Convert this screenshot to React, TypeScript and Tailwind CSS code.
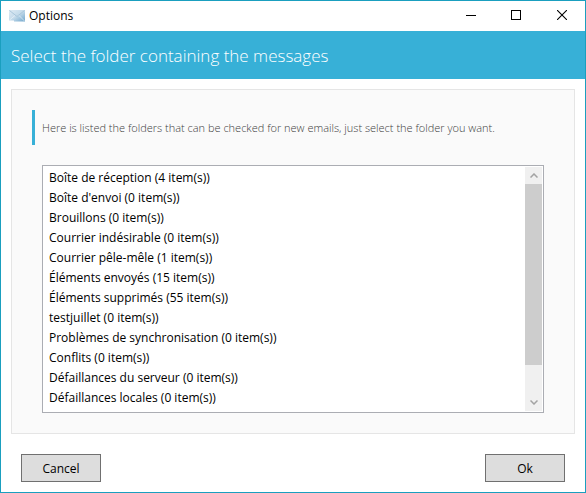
import React, { useRef, useState } from "react";

const folders = [
  { name: "Boîte de réception", count: 4 },
  { name: "Boîte d'envoi", count: 0 },
  { name: "Brouillons", count: 0 },
  { name: "Courrier indésirable", count: 0 },
  { name: "Courrier pêle-mêle", count: 1 },
  { name: "Éléments envoyés", count: 15 },
  { name: "Éléments supprimés", count: 55 },
  { name: "testjuillet", count: 0 },
  { name: "Problèmes de synchronisation", count: 0 },
  { name: "Conflits", count: 0 },
  { name: "Défaillances du serveur", count: 0 },
  { name: "Défaillances locales", count: 0 },
];

function MailIcon() {
  return (
    <svg className="w-4 h-3" viewBox="0 0 16 12" aria-hidden="true">
      <defs>
        <linearGradient id="mail" x1="0" y1="0" x2="1" y2="1">
          <stop offset="0" stopColor="#dfebf4" />
          <stop offset="0.5" stopColor="#c3daea" />
          <stop offset="1" stopColor="#6fa5cb" />
        </linearGradient>
      </defs>
      <path d="M0 0h16v11.5H5V10.5H0z" fill="url(#mail)" />
      <path d="M0.5 0.5L8 6.5L15.5 0.5" fill="none" stroke="#a5c3d8" strokeWidth="0.9" />
      <path d="M0.5 10L6 5.5M15.5 11L10 5.5" fill="none" stroke="#f3f9fc" strokeWidth="0.6" />
    </svg>
  );
}

function TitleBar() {
  return (
    <div className="flex h-[30px] items-center justify-between bg-white">
      <div className="flex items-center gap-1 pl-2">
        <MailIcon />
        <span className="text-xs">Options</span>
      </div>
      <div className="flex h-full pb-0.5">
        <button aria-label="Minimize" className="flex w-11 items-center justify-center">
          <svg className="size-[10px]" viewBox="0 0 10 10" shapeRendering="crispEdges">
            <path d="M0 5.5h10" stroke="#000" />
          </svg>
        </button>
        <button aria-label="Maximize" className="flex w-[46px] items-center justify-center">
          <svg className="size-[10px]" viewBox="0 0 10 10" shapeRendering="crispEdges">
            <path d="M0.5 0.5h9v9h-9z" fill="none" stroke="#000" />
          </svg>
        </button>
        <button aria-label="Close" className="flex w-[46px] items-center justify-center">
          <svg className="size-[10px]" viewBox="0 0 10 10">
            <path d="M0 0l10 10M10 0L0 10" stroke="#000" strokeWidth="1.1" />
          </svg>
        </button>
      </div>
    </div>
  );
}

export default function App() {
  const [selected, setSelected] = useState("");
  const listRef = useRef<HTMLSelectElement>(null);

  const scrollList = (delta: number) => {
    listRef.current?.scrollBy({ top: delta });
  };

  return (
    <div className="flex min-h-screen flex-col border border-[#1a9fbf] bg-white font-['Open_Sans','Noto_Sans',sans-serif] text-black">
      <TitleBar />

      <header className="flex h-12 items-center bg-[#37b0d7] px-[10px] pt-0.5">
        <h1 className="text-[17px] font-light text-white">Select the folder containing the messages</h1>
      </header>

      <main className="mx-[10px] mt-[10px] flex flex-1 flex-col border border-[#e5e5e5] bg-[#fafafa] px-5 py-5">
        <label
          htmlFor="folders"
          className="flex h-[35px] items-center border-l-3 border-[#37b0d7] pt-0.5 pl-[7px] text-[11px] font-light text-[#404040]"
        >
          Here is listed the folders that can be checked for new emails, just select the folder you want.
        </label>

        {/* Folder list */}
        <div className="mt-5 mr-[10px] ml-[10px] flex h-[248px] border border-[#abadb3] bg-white p-px">
          <select
            ref={listRef}
            id="folders"
            size={12}
            value={selected}
            onChange={(e) => setSelected(e.target.value)}
            className="h-full min-w-0 flex-1 overflow-y-auto bg-white py-px text-xs outline-none [scrollbar-width:none]"
          >
            {/* keeps the list unselected until a folder is picked */}
            <option value="" hidden />
            {folders.map((folder) => (
              <option key={folder.name} value={folder.name} className="h-5 px-[5px] py-px">
                {`${folder.name} (${folder.count} item(s))`}
              </option>
            ))}
          </select>
          <div className="flex w-[17px] flex-col bg-[#f0f0f0]">
            <button aria-label="Scroll up" onClick={() => scrollList(-20)} className="flex h-[17px] items-center justify-center">
              <svg className="h-[5px] w-[8px]" viewBox="0 0 8 5">
                <path d="M0.5 4.5L4 1l3.5 3.5" fill="none" stroke="#a3a3a3" strokeWidth="1.5" />
              </svg>
            </button>
            <div className="flex-1">
              <div className="h-[86%] bg-[#cdcdcd]" />
            </div>
            <button aria-label="Scroll down" onClick={() => scrollList(20)} className="flex h-[17px] items-center justify-center">
              <svg className="h-[5px] w-[8px]" viewBox="0 0 8 5">
                <path d="M0.5 0.5L4 4l3.5-3.5" fill="none" stroke="#a3a3a3" strokeWidth="1.5" />
              </svg>
            </button>
          </div>
        </div>
      </main>

      <footer className="flex justify-between px-5 pt-5 pb-[10px]">
        <button className="h-7 w-20 border border-[#707070] bg-[#dddddd] pt-0.5 text-xs">Cancel</button>
        <button className="h-7 w-20 border border-[#707070] bg-[#dddddd] pt-0.5 text-xs">Ok</button>
      </footer>
    </div>
  );
}
